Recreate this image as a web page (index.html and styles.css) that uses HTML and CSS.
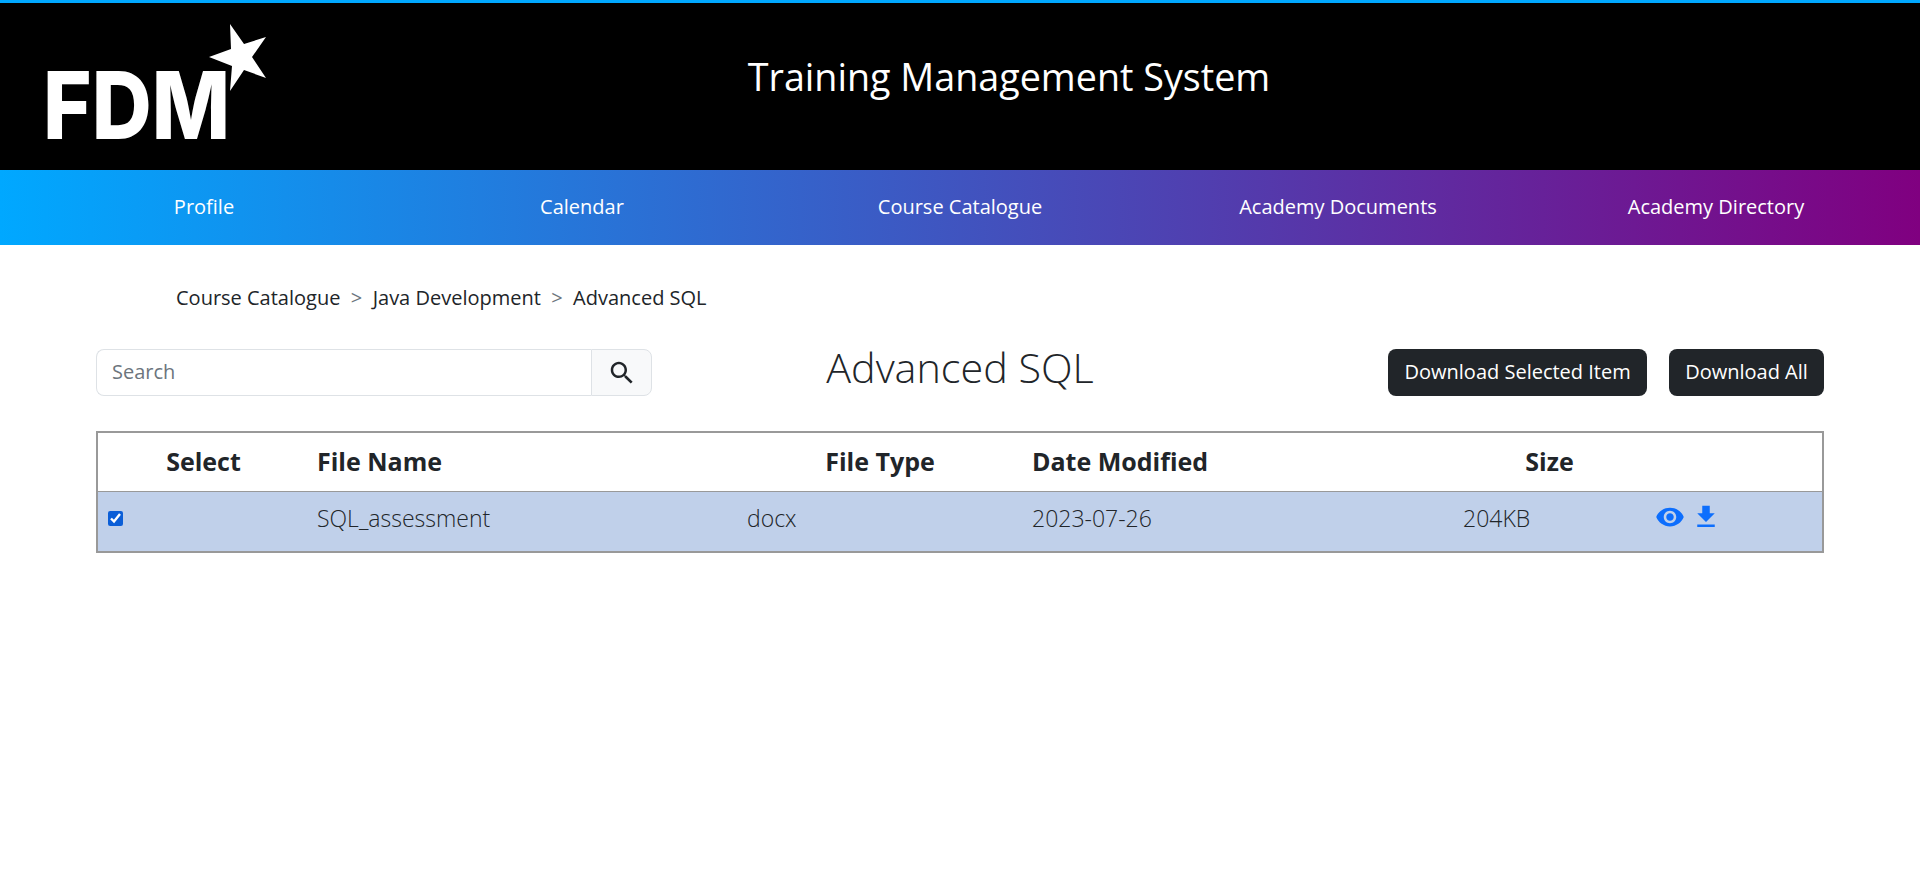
FILE: index.html
```html
<!DOCTYPE html>
<html lang="en">
<head>
<meta charset="utf-8">
<title>Training Management System</title>
<link rel="stylesheet" href="styles.css">
</head>
<body>
<header class="masthead">
  <svg class="logo" viewBox="0 0 240 150" width="240" height="150" role="img" aria-label="FDM">
    <text class="logo-text" x="3" y="121" textLength="187" lengthAdjust="spacingAndGlyphs">FDM</text>
    <polygon class="logo-star" points="190,6 204,26 226,19 212,39 226,60 204,52 190,73 192,48 169,39 191,31"/>
  </svg>
  <h1 class="site-title">Training Management System</h1>
</header>
<nav class="mainnav">
  <a href="#">Profile</a>
  <a href="#">Calendar</a>
  <a href="#">Course Catalogue</a>
  <a href="#">Academy Documents</a>
  <a href="#">Academy Directory</a>
</nav>
<main class="content">
  <ol class="crumbs">
    <li>Course Catalogue</li>
    <li class="sep">&gt;</li>
    <li>Java Development</li>
    <li class="sep">&gt;</li>
    <li>Advanced SQL</li>
  </ol>
  <div class="toolbar">
    <form class="search">
      <input type="text" class="search-input" placeholder="Search">
      <button type="button" class="search-btn" aria-label="Search">
        <svg viewBox="0 0 24 24" width="30" height="30"><path d="M15.5 14h-.79l-.28-.27C15.41 12.59 16 11.11 16 9.5 16 5.91 13.09 3 9.5 3S3 5.91 3 9.5 5.91 16 9.5 16c1.61 0 3.09-.59 4.23-1.57l.27.28v.79l5 4.99L20.49 19l-4.99-5zm-6 0C7.01 14 5 11.99 5 9.5S7.01 5 9.5 5 14 7.01 14 9.5 11.99 14 9.5 14z"/></svg>
      </button>
    </form>
    <h2 class="page-title">Advanced SQL</h2>
    <div class="actions">
      <button type="button" class="btn-dark">Download Selected Item</button>
      <button type="button" class="btn-dark">Download All</button>
    </div>
  </div>
  <table class="files">
    <colgroup>
      <col class="c-select"><col class="c-name"><col class="c-type"><col class="c-date"><col class="c-size"><col class="c-act">
    </colgroup>
    <thead>
      <tr>
        <th class="center">Select</th>
        <th>File Name</th>
        <th class="center nudge">File Type</th>
        <th>Date Modified</th>
        <th class="center nudge">Size</th>
        <th></th>
      </tr>
    </thead>
    <tbody>
      <tr>
        <td class="check-cell"><input type="checkbox" class="check" checked></td>
        <td>SQL_assessment</td>
        <td>docx</td>
        <td>2023-07-26</td>
        <td>204KB</td>
        <td class="icon-cell">
          <svg class="icon" viewBox="0 0 24 24"><path d="M12 4.5C7 4.5 2.73 7.61 1 12c1.73 4.39 6 7.5 11 7.5s9.27-3.11 11-7.5c-1.73-4.39-6-7.5-11-7.5zM12 17c-2.76 0-5-2.24-5-5s2.24-5 5-5 5 2.24 5 5-2.24 5-5 5zm0-8c-1.66 0-3 1.34-3 3s1.34 3 3 3 3-1.34 3-3-1.34-3-3-3z"/></svg>
          <svg class="icon" viewBox="0 0 24 24"><path d="M19 9h-4V3H9v6H5l7 7 7-7zM5 18v2h14v-2H5z"/></svg>
        </td>
      </tr>
    </tbody>
  </table>
</main>
</body>
</html>
```
FILE: styles.css
```css
* { box-sizing: border-box; }
html, body { margin: 0; padding: 0; }
body {
  font-family: "Open Sans", "Noto Sans", sans-serif;
  font-size: 20px;
  line-height: 1.5;
  color: #212529;
  background: #fff;
}
.masthead {
  position: relative;
  height: 170px;
  background: #000;
  border-top: 3px solid #00a8ff;
  display: flex;
  justify-content: center;
}
.logo {
  position: absolute;
  left: 40px;
  top: 15px;
}
.logo-text {
  font-family: Inter, "Liberation Sans", sans-serif;
  font-size: 94px;
  font-weight: 800;
  fill: #fff;
}
.logo-star { fill: #fff; }
.site-title {
  margin: 51px 0 0 98px;
  font-size: 37.7px;
  font-weight: 400;
  line-height: 1.2;
  color: #fff;
}
.mainnav {
  height: 75px;
  padding: 0 15px 2px;
  display: grid;
  grid-template-columns: repeat(5, 1fr);
  align-items: center;
  background: linear-gradient(to right, #00a8ff, #800080);
}
.mainnav a {
  color: #fff;
  text-align: center;
  text-decoration: none;
}
.content { padding: 38px 96px 0; }
.crumbs {
  list-style: none;
  margin: 0 0 36px 80px;
  padding: 0;
  display: flex;
  gap: 10.4px;
}
.crumbs .sep { color: #6c757d; }
.toolbar {
  display: grid;
  grid-template-columns: 1fr auto 1fr;
  align-items: start;
  height: 47px;
}
.search { display: flex; width: 556px; height: 47px; }
.search-input {
  width: 495px;
  padding: 0 15px 2px;
  border: 1px solid #dee2e6;
  border-right: 0;
  border-radius: 8px 0 0 8px;
  font: inherit;
  color: #212529;
  background: #fff;
}
.search-input::placeholder { color: #6c757d; }
.search-btn {
  width: 61px;
  padding: 0;
  display: flex;
  align-items: center;
  justify-content: center;
  border: 1px solid #dee2e6;
  border-radius: 0 8px 8px 0;
  background: #f8f9fa;
}
.search-btn svg { fill: #212529; }
.page-title {
  margin: -6px 0 0;
  font-size: 41.3px;
  font-weight: 300;
  line-height: 48px;
}
.actions {
  display: flex;
  justify-content: flex-end;
  gap: 22px;
}
.btn-dark {
  height: 47px;
  padding: 0 16.2px 2px;
  border: 0;
  border-radius: 8px;
  background: #212529;
  color: #fff;
  font: inherit;
}
.files {
  width: 100%;
  margin-top: 35px;
  table-layout: fixed;
  border-collapse: collapse;
  border: 2px solid #999;
}
.c-select { width: 212px; }
.c-name { width: 430px; }
.c-type { width: 285px; }
.c-date { width: 431px; }
.c-size { width: 192px; }
.files th, .files td {
  padding: 9px 8px 8px;
  text-align: left;
  vertical-align: top;
}
.files th {
  padding: 9px 8px 11px;
  font-size: 25px;
  font-weight: 700;
  line-height: 38px;
}
.files th.center { text-align: center; }
.files th.nudge { padding-right: 11px; }
.files thead tr { border-bottom: 1px solid #999; }
.files tbody tr { background: #c0d0ea; height: 60px; }
.files td {
  font-size: 23px;
  font-weight: 300;
  line-height: 34px;
}
.files .check-cell { padding: 19px 0 0 10px; }
.check { display: block; margin: 0; width: 15px; height: 15px; accent-color: #0b5ed7; }
.icon-cell { white-space: nowrap; }
.files .icon-cell { padding-top: 10px; line-height: 30px; }
.icon { display: inline-block; width: 30px; height: 30px; fill: #0d6efd; vertical-align: top; }
```
